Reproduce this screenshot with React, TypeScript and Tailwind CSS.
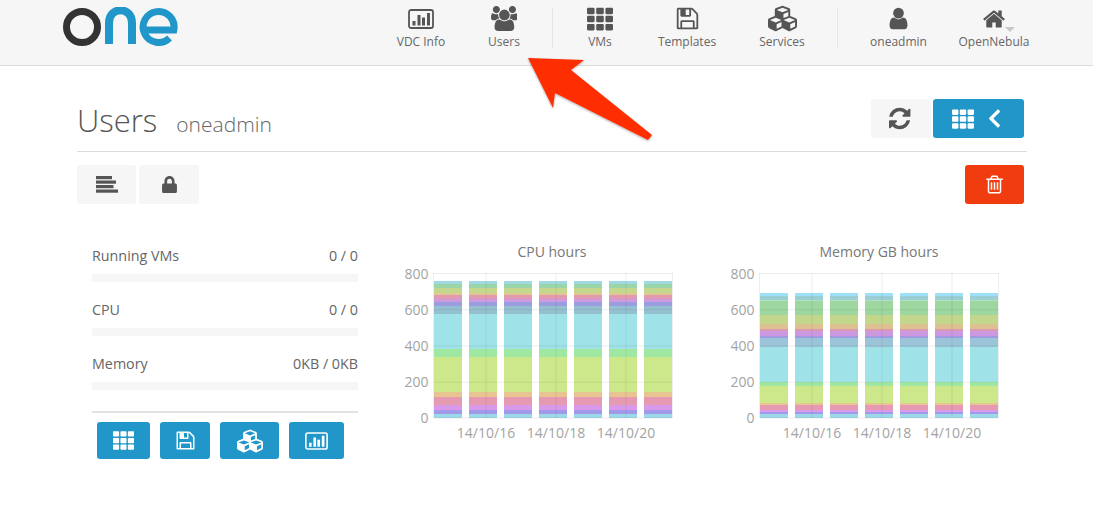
import { FaTh, FaCubes, FaChevronLeft, FaLock } from "react-icons/fa";
import type { ReactNode } from "react";

type Seg = [number, number, string];

const cpu: Seg[] = [
  [281, 284, "#9fd9e2"], [284, 288, "#9bd6aa"], [288, 293, "#c4d78f"], [293, 295, "#dfc990"],
  [295, 299, "#e19ab0"], [299, 302, "#cf9adf"], [302, 306, "#9a9edf"], [306, 314, "#95c0d0"],
  [314, 349, "#9fe3e8"], [349, 357, "#a0e8a2"], [357, 392, "#cde88b"], [392, 397, "#e8c490"],
  [397, 405, "#e69ab2"], [405, 410, "#d99aeb"], [410, 414, "#a09ae8"], [414, 418, "#9cd8e8"],
];

const mem: Seg[] = [
  [293, 296, "#9ee0f8"], [296, 300.5, "#99cfd2"], [300.5, 315, "#9dd79f"], [315, 324, "#c2d68c"],
  [324, 329, "#dcc290"], [329, 331, "#dc9ab0"], [331, 336, "#cc98e0"], [336, 338, "#a09ae0"],
  [338, 347, "#9cc4d8"], [347, 382, "#9fe3e8"], [382, 386, "#a0e8a2"], [386, 403, "#cde88b"],
  [403, 405, "#e8c490"], [405, 410, "#e69ab2"], [410, 412, "#d99aeb"], [412, 414, "#a09ae8"],
  [414, 418, "#9cd8e8"],
];

const P = {
  users: "M593 896q-162 5-265 128h-134q-82 0-138-40.500t-56-118.500q0-353 124-353 6 0 43.500 21t97.500 42.500 119 21.500q67 0 133-23-5 37-5 66 0 139 81 256zm1071 637q0 120-73 189.500t-194 69.500h-874q-121 0-194-69.500t-73-189.500q0-53 3.500-103.500t14-109 26.500-108.500 43-97.500 62-81 85.500-53.500 111.500-20q10 0 43 21.500t73 48 107 48 135 21.500 135-21.500 107-48 73-48 43-21.500q61 0 111.500 20t85.500 53.500 62 81 43 97.500 26.500 108.500 14 109 3.500 103.500zm-1024-1277q0 106-75 181t-181 75-181-75-75-181 75-181 181-75 181 75 75 181zm704 384q0 159-112.500 271.500t-271.500 112.500-271.500-112.500-112.500-271.500 112.500-271.500 271.500-112.500 271.500 112.500 112.500 271.500zm576 225q0 78-56 118.500t-138 40.500h-134q-103-123-265-128 81-117 81-256 0-29-5-66 66 23 133 23 59 0 119-21.500t97.500-42.500 43.500-21q124 0 124 353zm-128-609q0 106-75 181t-181 75-181-75-75-181 75-181 181-75 181 75 75 181z",
  save: "M512 1536h768v-384h-768v384zm896 0h128v-896q0-14-10-38.500t-20-34.500l-281-281q-10-10-34-20t-39-10v416q0 40-28 68t-68 28h-576q-40 0-68-28t-28-68v-416h-128v1280h128v-416q0-40 28-68t68-28h832q40 0 68 28t28 68v416zm-384-928v-320q0-13-9.500-22.500t-22.500-9.500h-192q-13 0-22.500 9.500t-9.500 22.500v320q0 13 9.500 22.500t22.500 9.500h192q13 0 22.500-9.500t9.500-22.500zm640 32v928q0 40-28 68t-68 28h-1344q-40 0-68-28t-28-68v-1344q0-40 28-68t68-28h928q40 0 88 20t76 48l280 280q28 28 48 76t20 88z",
  user: "M1536 1399q0 109-62.500 187t-150.500 78h-854q-88 0-150.500-78t-62.500-187q0-85 8.500-160.500t31.500-152 58.500-131 94-89 134.500-34.500q131 128 313 128t313-128q76 0 134.500 34.500t94 89 58.500 131 31.500 152 8.500 160.500zm-256-887q0 159-112.500 271.500t-271.500 112.500-271.500-112.500-112.500-271.500 112.500-271.500 271.500-112.500 271.500 112.500 112.500 271.500z",
  home: "M1472 992v480q0 26-19 45t-45 19h-384v-384h-256v384h-384q-26 0-45-19t-19-45v-480q0-1 .5-3t.5-3l575-474 575 474q1 2 1 6zm223-69l-62 74q-8 9-21 11h-3q-13 0-21-7l-692-577-692 577q-12 8-24 7-13-2-21-11l-62-74q-8-10-7-23.500t11-21.500l719-599q32-26 76-26t76 26l244 204v-195q0-14 9-23t23-9h192q14 0 23 9t9 23v408l219 182q10 8 11 21.500t-7 23.500z",
  sync: "M1511 1056q0 5-1 7-64 268-268 434.500t-478 166.500q-146 0-282.500-55t-243.500-157l-129 129q-19 19-45 19t-45-19-19-45v-448q0-26 19-45t45-19h448q26 0 45 19t19 45-19 45l-137 137q71 66 161 102t187 36q134 0 250-65t186-179q11-17 53-117 8-23 30-23h192q13 0 22.500 9.500t9.500 22.500zm25-800v448q0 26-19 45t-45 19h-448q-26 0-45-19t-19-45 19-45l138-138q-148-137-349-137-134 0-250 65t-186 179q-11 17-53 117-8 23-30 23h-199q-13 0-22.500-9.500t-9.500-22.500v-7q65-268 270-434.500t480-166.500q146 0 284 55.500t245 156.500l130-129q19-19 45-19t45 19 19 45z",
  trash: "M704 736v576q0 14-9 23t-23 9h-64q-14 0-23-9t-9-23v-576q0-14 9-23t23-9h64q14 0 23 9t9 23zm256 0v576q0 14-9 23t-23 9h-64q-14 0-23-9t-9-23v-576q0-14 9-23t23-9h64q14 0 23 9t9 23zm256 0v576q0 14-9 23t-23 9h-64q-14 0-23-9t-9-23v-576q0-14 9-23t23-9h64q14 0 23 9t9 23zm128 724v-948h-896v948q0 22 7 40.500t14.500 27 10.500 8.500h832q3 0 10.500-8.500t14.500-27 7-40.500zm-672-1076h448l-48-117q-7-9-17-11h-317q-10 2-17 11zm928 32v64q0 14-9 23t-23 9h-96v948q0 83-47 143.500t-113 60.500h-832q-66 0-113-58.500t-47-141.500v-952h-96q-14 0-23-9t-9-23v-64q0-14 9-23t23-9h309l70-167q15-37 54-63t79-26h320q40 0 79 26t54 63l70 167h309q14 0 23 9t9 23z",
};

function Glyph({ d, size, vb = 1792 }: { d: string; size: number; vb?: number }) {
  return (
    <svg width={size * (vb / 1792)} height={size} viewBox={`0 0 ${vb} 1792`} fill="currentColor" className="block">
      <path d={d} />
    </svg>
  );
}

function ChartBox({ w, h }: { w: number; h: number }) {
  return (
    <svg width={w} height={h} viewBox="0 0 26 20" className="block">
      <rect x="1" y="1" width="24" height="18" rx="2" fill="none" stroke="currentColor" strokeWidth="1.8" />
      <rect x="4.5" y="12" width="3" height="4.5" fill="currentColor" />
      <rect x="9.5" y="6" width="3" height="10.5" fill="currentColor" />
      <rect x="14" y="8.500" width="3" height="8" fill="currentColor" />
      <rect x="19" y="4" width="3" height="12.5" fill="currentColor" />
    </svg>
  );
}

function Chart({ segs, left }: { segs: Seg[]; left: number }) {
  const top = 265;
  const ticks = [800, 600, 400, 200, 0];
  const ys = [273.5, 309.75, 346, 382.25, 418];
  const bars = [0, 35, 70, 105, 140, 175, 210];
  const vs = [52, 122, 192];
  return (
    <svg width="290" height="180" viewBox="0 0 290 180" className="block" style={{ fontFamily: "'Open Sans', sans-serif" }}>
      {bars.map((b) =>
        segs.map(([a, z, c]) => (
          <rect key={b + "-" + a} x={left + b + 0.5} y={a - top} width={28} height={z - a} fill={c} />
        )),
      )}
      {ys.map((y) => (
        <line key={y} x1={left} x2={left + 239} y1={y - top} y2={y - top} stroke="#000" strokeOpacity="0.07" />
      ))}
      <line x1={left} x2={left} y1={273 - top} y2={418 - top} stroke="#000" strokeOpacity="0.07" />
      <line x1={left + 239} x2={left + 239} y1={273 - top} y2={418 - top} stroke="#000" strokeOpacity="0.07" />
      {vs.map((x) => (
        <line key={x} x1={left + x + 0.5} x2={left + x + 0.5} y1={273 - top} y2={418 - top} stroke="#000" strokeOpacity="0.07" />
      ))}
      {ticks.map((t, i) => (
        <text key={t} x={left - 5} y={ys[i] - top + 5} textAnchor="end" fontSize="14" fill="#a3a3a3">{t}</text>
      ))}
      {["14/10/16", "14/10/18", "14/10/20"].map((t, i) => (
        <text key={t} x={left + vs[i] + 0.5} y={438 - top} textAnchor="middle" fontSize="14" fill="#a3a3a3">{t}</text>
      ))}
    </svg>
  );
}

function NavItem({ w, label, icon, caret }: { w: string; label: string; icon: ReactNode; caret?: boolean }) {
  return (
    <div className={"relative flex flex-col items-center " + w}>
      <div className="flex h-[27px] items-center justify-center text-[#555]">{icon}</div>
      <div className="mt-[1px] text-[12px] leading-[17px] text-[#666]">{label}</div>
      {caret && <div className="absolute right-[14px] top-[22px] h-0 w-0 border-x-[5px] border-t-[5px] border-x-transparent border-t-[#c8c8c8]" />}
    </div>
  );
}

function Stat({ name, value }: { name: string; value: string }) {
  return (
    <div className="h-[54px]">
      <div className="flex h-[20px] items-center justify-between text-[14.3px] text-[#666]">
        <span>{name}</span>
        <span>{value}</span>
      </div>
      <div className="mt-[8px] h-[8px] bg-[#f6f6f6]" />
    </div>
  );
}

function BlueBtn({ w, children }: { w: string; children: ReactNode }) {
  return <div className={"flex h-[37px] items-center justify-center rounded-[3px] bg-[#2196c9] text-white " + w}>{children}</div>;
}

function AlignIcon() {
  return (
    <svg width="22" height="17" viewBox="0 0 22 17" fill="currentColor" className="block">
      <rect x="0" y="0" width="16" height="3.2" />
      <rect x="0" y="4.500" width="20" height="3.2" />
      <rect x="0" y="9" width="17.500" height="3.2" />
      <rect x="0" y="13.500" width="22" height="3.2" />
    </svg>
  );
}

export default function App() {
  return (
    <div className="relative h-[523px] w-[1093px] overflow-hidden bg-white" style={{ fontFamily: "'Open Sans', sans-serif" }}>
      <header className="flex h-[66px] items-start border-b border-[#dcdcdc] bg-[#f6f6f6]">
        <svg width="116" height="40" viewBox="0 0 116 40" className="ml-[63px] mt-[7px] block">
          <circle cx="19" cy="20" r="15.5" fill="none" stroke="#333333" strokeWidth="7" />
          <path d="M46 37 V16 C46 -1 69 -1 69 16 V37" fill="none" stroke="#2196c9" strokeWidth="8" />
          <path d="M80.5 23 H110.8 A15.500 15.500 0 1 0 106.5 31" fill="none" stroke="#2196c9" strokeWidth="7" />
        </svg>
        <nav className="ml-auto mr-[64px] mt-[5px] flex">
          <NavItem w="w-[84px]" label="VDC Info" icon={<ChartBox w={26} h={20} />} />
          <NavItem w="w-[82px]" label="Users" icon={<Glyph d={P.users} size={25} vb={1920} />} />
          <div className="ml-[7px] mt-[3px] h-[40px] w-px bg-[#e6e6e6]" />
          <NavItem w="w-[94px]" label="VMs" icon={<FaTh size={26} />} />
          <NavItem w="w-[80px]" label="Templates" icon={<Glyph d={P.save} size={25} />} />
          <NavItem w="w-[110px]" label="Services" icon={<FaCubes size={29} />} />
          <div className="mt-[3px] h-[40px] w-px bg-[#e6e6e6]" />
          <NavItem w="w-[121px]" label="oneadmin" icon={<Glyph d={P.user} size={25} />} />
          <NavItem w="w-[70px]" label="OpenNebula" caret icon={<Glyph d={P.home} size={24} />} />
        </nav>
      </header>

      <main className="pl-[77px] pr-[66px] pt-[33px]">
        <div className="flex h-[53px] items-start justify-between border-b border-[#dcdcdc]">
          <div className="flex items-baseline text-[#555]">
            <span className="text-[31px] font-light leading-[42px]">Users</span>
            <span className="ml-[19px] text-[21px] font-light text-[#666]">oneadmin</span>
          </div>
          <div className="mr-[3px] flex gap-[2px]">
            <div className="flex h-[39px] w-[60px] items-center justify-center rounded-[3px] bg-[#f6f6f6] text-[#555]">
              <Glyph d={P.sync} size={25} />
            </div>
            <div className="flex h-[39px] w-[91px] items-center justify-center gap-[10px] rounded-[3px] bg-[#2196c9] text-white">
              <FaTh size={22} />
              <FaChevronLeft size={21} />
            </div>
          </div>
        </div>

        <div className="mt-[13px] flex justify-between pr-[3px]">
          <div className="flex gap-[3px]">
            <div className="flex h-[39px] w-[59px] items-center justify-center rounded-[3px] bg-[#f6f6f6] text-[#555]"><AlignIcon /></div>
            <div className="flex h-[39px] w-[60px] items-center justify-center rounded-[3px] bg-[#f6f6f6] text-[#555]"><FaLock size={17} /></div>
          </div>
          <div className="flex h-[39px] w-[59px] items-center justify-center rounded-[3px] bg-[#f03c0e] text-white"><Glyph d={P.trash} size={21} /></div>
        </div>

        <div className="mt-[26px] flex items-start">
          <div className="ml-[15px] w-[266px] pt-[16px]">
            <Stat name="Running VMs" value="0 / 0" />
            <Stat name="CPU" value="0 / 0" />
            <Stat name="Memory" value="0KB / 0KB" />
            <div className="mt-[3px] h-[2px] bg-[#e2e2e2]" />
            <div className="ml-[5px] mt-[9px] flex gap-[10px]">
              <BlueBtn w="w-[53px]"><FaTh size={21} /></BlueBtn>
              <BlueBtn w="w-[50px]"><Glyph d={P.save} size={21} /></BlueBtn>
              <BlueBtn w="w-[59px]"><FaCubes size={26} /></BlueBtn>
              <BlueBtn w="w-[55px]"><ChartBox w={23} h={18} /></BlueBtn>
            </div>
          </div>
          <div className="ml-[37px] mt-[9px] w-[290px]">
            <div className="h-[26px] pl-[24px] pt-[3px] text-center text-[14px] leading-[20px] text-[#777]">CPU hours</div>
            <Chart segs={cpu} left={38.5} />
          </div>
          <div className="ml-[40px] mt-[9px] w-[290px]">
            <div className="h-[26px] pl-[18px] pt-[3px] text-center text-[14px] leading-[20px] text-[#777]">Memory GB hours</div>
            <Chart segs={mem} left={34.5} />
          </div>
        </div>
      </main>

      <svg width="1093" height="523" viewBox="0 0 1093 523" className="pointer-events-none absolute left-0 top-0">
        <defs>
          <filter id="sh" x="-10%" y="-10%" width="120%" height="120%">
            <feDropShadow dx="0" dy="1" stdDeviation="1" floodColor="#000" floodOpacity="0.35" />
          </filter>
        </defs>
        <polygon points="528,58 584,60 571,70 652,135 648,140 555,93 553,108" fill="#ff2d00" filter="url(#sh)" />
      </svg>
    </div>
  );
}
